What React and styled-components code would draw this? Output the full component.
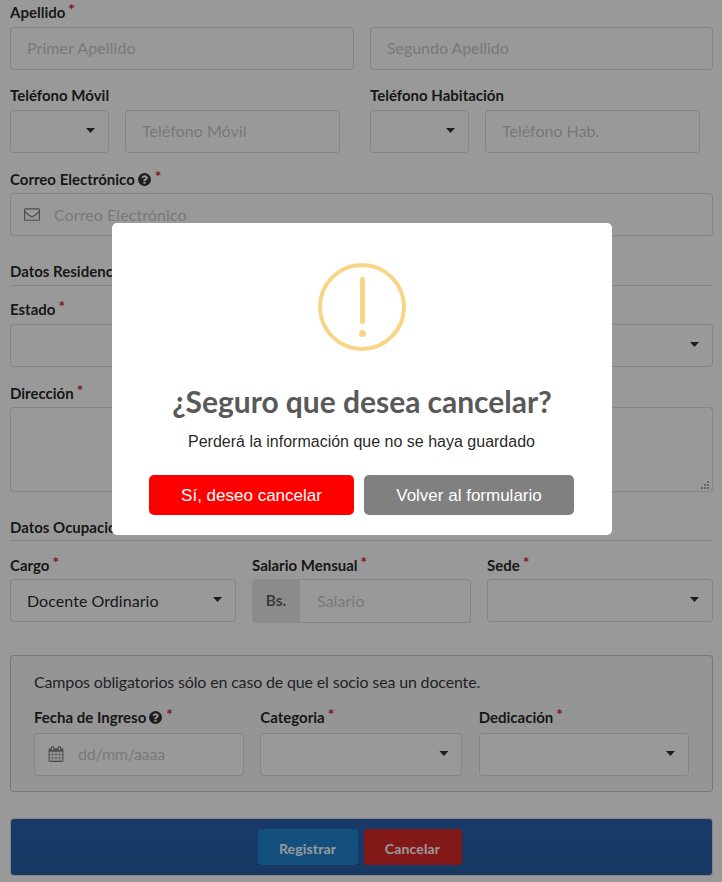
import React from 'react';
import styled, { createGlobalStyle } from 'styled-components';

const GlobalStyle = createGlobalStyle`
  *, *::before, *::after { box-sizing: border-box; }
  html, body { margin: 0; padding: 0; overflow: hidden; background: #fff; }
  body { font-family: Lato, 'Liberation Sans', sans-serif; font-size: 16px; color: rgba(0, 0, 0, 0.87); }
`;

const border = '1px solid rgba(34, 36, 38, 0.15)';

const Form = styled.form`
  width: 703px;
  margin: 0 0 0 10px;
  padding-top: 3px;
  height: 882px;
  overflow: hidden;
`;

const Row = styled.div`
  display: grid;
  grid-template-columns: ${(p) => p.$cols || '1fr'};
  column-gap: ${(p) => p.$colGap ?? 16}px;
  margin-bottom: ${(p) => p.$gap ?? 16}px;
`;

const Group = styled.div`
  display: grid;
  grid-template-columns: 99px 215px;
  column-gap: 16px;
`;

const Label = styled.label`
  display: flex;
  align-items: center;
  height: 20px;
  margin-bottom: 4px;
  font-size: 15px;
  font-weight: 700;
  line-height: 18px;
  padding-bottom: ${(p) => p.$lift ?? 2}px;
  white-space: nowrap;
`;

const Asterisk = styled.span`
  margin: -6px 0 0 3px;
  color: #db2828;
  font-size: 15.5px;
`;

const Control = styled.div`
  display: flex;
  align-items: center;
  min-width: 0;
  height: ${(p) => p.$height || 43}px;
  padding: 0 16px;
  border: ${border};
  border-radius: 4px;
  background: #fff;
`;

const Input = styled.input`
  flex: 1;
  width: 0;
  min-width: 0;
  padding: ${(p) => p.$top ?? 0}px 0 2px;
  border: 0;
  outline: 0;
  background: transparent;
  font: 16px Lato, sans-serif;
  letter-spacing: ${(p) => p.$tracking ?? 0.08}px;
  color: rgba(0, 0, 0, 0.87);
  &::placeholder { color: rgba(191, 191, 191, 0.87); opacity: 1; }
`;

const SelectBox = styled(Control)`
  justify-content: space-between;
  padding-right: 13px;
  letter-spacing: 0.05px;
`;

const Caret = styled.span`
  width: 9px;
  height: 5px;
  margin: -2px 0 0 auto;
  background: rgba(0, 0, 0, 0.8);
  clip-path: polygon(0 0, 100% 0, 50% 100%);
`;

const HelpIcon = styled.svg`
  width: 15px;
  height: 15px;
  margin: 1px 0 0 2px;
  fill: rgba(0, 0, 0, 0.8);
`;

const FieldIcon = styled.svg`
  width: 16px;
  height: 16px;
  margin: -1px 14px 0 -3px;
  fill: rgba(0, 0, 0, 0.5);
`;

const Heading = styled.h4`
  height: 25px;
  margin: 0 0 14px;
  border-bottom: ${border};
  font-size: 15px;
  font-weight: 700;
  line-height: 20px;
  padding-top: ${(p) => p.$top}px;
`;

const TextArea = styled.textarea`
  display: block;
  width: 100%;
  height: 85px;
  border: ${border};
  border-radius: 4px;
  outline: 0;
  resize: none;
  background: #fff;
`;

const AreaWrap = styled.div`
  position: relative;
  margin-bottom: 24px;
`;

const Grip = styled.svg`
  position: absolute;
  right: 4px;
  bottom: 3px;
  width: 8px;
  height: 8px;
  fill: #aaa;
`;

const Prefixed = styled.div`
  display: flex;
  height: 44px;
`;

const Prefix = styled.span`
  display: flex;
  flex: none;
  align-items: center;
  justify-content: center;
  width: 48px;
  padding-bottom: 2px;
  border-radius: 4px 0 0 4px;
  background: #e8e8e8;
  color: rgba(0, 0, 0, 0.6);
  font-size: 15.5px;
  font-weight: 700;
`;

const PrefixedControl = styled(Control)`
  flex: 1;
  border-left: 0;
  border-radius: 0 4px 4px 0;
  padding-left: 17px;
`;

const Message = styled.section`
  height: 137px;
  margin-bottom: 26px;
  padding: 16px 23px 0;
  border: 1px solid rgba(34, 36, 38, 0.22);
  border-radius: 4px;
  background: #f8f8f9;
`;

const MessageText = styled.p`
  height: 20px;
  margin: 0 0 17px;
  font-size: 16px;
  line-height: 20px;
  letter-spacing: -0.16px;
  white-space: nowrap;
  color: rgba(0, 0, 0, 0.8);
`;

const ActionBar = styled.footer`
  display: flex;
  justify-content: center;
  gap: 6px;
  height: 58px;
  padding: 10px 3px 0 0;
  border: 1px solid rgba(34, 36, 38, 0.15);
  border-radius: 4px;
  background: linear-gradient(#2962ae, #265ea5) padding-box;
`;

const ActionButton = styled.button`
  width: ${(p) => p.$width}px;
  height: 36px;
  padding: 2px 1px 0 0;
  border: 0;
  border-radius: 4px;
  background: ${(p) => p.$color};
  color: #fff;
  font: 700 14px Lato, sans-serif;
  letter-spacing: 0.15px;
`;

const Overlay = styled.div`
  position: fixed;
  inset: 0;
  padding: 223px 0 0 112px;
  background: rgba(0, 0, 0, 0.4);
`;

const Modal = styled.div`
  display: flex;
  flex-direction: column;
  align-items: center;
  width: 500px;
  height: 312px;
  padding-top: 40px;
  border-radius: 5px;
  background: #fff;
`;

const WarningIcon = styled.svg`
  width: 88px;
  height: 88px;
`;

const Title = styled.h2`
  margin: 30px 0 0;
  height: 40px;
  color: #595959;
  font-size: 30px;
  font-weight: 700;
  line-height: 40px;
  letter-spacing: -0.03px;
  white-space: nowrap;
`;

const ModalText = styled.p`
  margin: 11px 1px 0 0;
  height: 20px;
  font: 16px/20px 'Liberation Sans', sans-serif;
`;

const ModalActions = styled.div`
  display: flex;
  gap: 10px;
  margin: 23px 1px 0 0;
  padding-right: 1px;
`;

const ModalButton = styled.button`
  width: ${(p) => p.$width}px;
  height: 40px;
  padding: 1px 0 0 1px;
  border: 0;
  border-radius: 5px;
  background: ${(p) => p.$color};
  color: #fff;
  font: 17px 'Liberation Sans', sans-serif;
`;

const Help = () => (
  <HelpIcon viewBox="0 0 1792 1792">
    <path d="M1024 1376v-192q0-14-9-23t-23-9h-192q-14 0-23 9t-9 23v192q0 14 9 23t23 9h192q14 0 23-9t9-23zm256-672q0-88-55.5-163t-138.5-116-170-41q-243 0-371 213-15 24 8 42l132 100q7 6 19 6 16 0 25-12 53-68 86-92 34-24 86-24 48 0 85.5 26t37.5 59q0 38-20 61t-68 45q-63 28-115.5 86.5t-52.5 125.5v36q0 14 9 23t23 9h192q14 0 23-9t9-23q0-19 21.5-49.5t54.5-49.5q32-18 49-28.5t46-35 44.5-48 28-60.5 12.5-81zm384 192q0 209-103 385.5t-279.5 279.5-385.5 103-385.5-103-279.5-279.5-103-385.5 103-385.5 279.5-279.5 385.5-103 385.5 103 279.5 279.5 103 385.5z" />
  </HelpIcon>
);

const Envelope = () => (
  <FieldIcon viewBox="0 0 1792 1792">
    <path d="M1664 1504v-768q-32 36-69 66-268 206-426 338-51 43-83 67t-86.5 48.5-102.5 24.5h-2q-48 0-102.5-24.5t-86.5-48.5-83-67q-158-132-426-338-37-30-69-66v768q0 13 9.5 22.5t22.5 9.5h1472q13 0 22.5-9.5t9.5-22.5zm0-1051v-24.5l-.5-13-3-12.5-5.5-9-9-7.5-14-2.5h-1472q-13 0-22.5 9.5t-9.5 22.5q0 168 147 284 193 152 401 317 6 5 35 29.5t46 37.5 44.5 31.5 50.5 27.5 43 9h2q20 0 43-9t50.5-27.5 44.5-31.5 46-37.5 35-29.5q208-165 401-317 54-43 100.5-115.5t46.5-131.5zm128-37v1088q0 66-47 113t-113 47h-1472q-66 0-113-47t-47-113v-1088q0-66 47-113t113-47h1472q66 0 113 47t47 113z" />
  </FieldIcon>
);

const Calendar = () => (
  <FieldIcon viewBox="0 0 1792 1792">
    <path d="M192 1664h288v-288h-288v288zm352 0h320v-288h-320v288zm-352-352h288v-320h-288v320zm352 0h320v-320h-320v320zm-352-384h288v-288h-288v288zm736 736h320v-288h-320v288zm-384-736h320v-288h-320v288zm768 736h288v-288h-288v288zm-384-352h320v-320h-320v320zm-352-864v-288q0-13-9.5-22.5t-22.5-9.5h-64q-13 0-22.5 9.5t-9.5 22.5v288q0 13 9.5 22.5t22.5 9.5h64q13 0 22.5-9.5t9.5-22.5zm736 864h288v-320h-288v320zm-384-384h320v-288h-320v288zm384 0h288v-288h-288v288zm32-480v-288q0-13-9.5-22.5t-22.5-9.5h-64q-13 0-22.5 9.5t-9.5 22.5v288q0 13 9.5 22.5t22.5 9.5h64q13 0 22.5-9.5t9.5-22.5zm384-64v1280q0 52-38 90t-90 38h-1408q-52 0-90-38t-38-90v-1280q0-52 38-90t90-38h128v-96q0-66 47-113t113-47h64q66 0 113 47t47 113v96h384v-96q0-66 47-113t113-47h64q66 0 113 47t47 113v96h128q52 0 90 38t38 90z" />
  </FieldIcon>
);

const FieldLabel = ({ children, required, help, lift }) => (
  <Label $lift={lift}>
    {children}
    {help && <Help />}
    {required && <Asterisk>*</Asterisk>}
  </Label>
);

const TextInput = ({ placeholder, icon, tracking, top }) => (
  <Control>
    {icon}
    <Input placeholder={placeholder} $tracking={tracking} $top={top} />
  </Control>
);

const Select = ({ children }) => (
  <SelectBox>
    {children}
    <Caret />
  </SelectBox>
);

export default function App() {
  return (
    <>
      <GlobalStyle />
      <Form>
        <FieldLabel required>Apellido</FieldLabel>
        <Row $cols="344px 343px">
          <TextInput placeholder="Primer Apellido" />
          <TextInput placeholder="Segundo Apellido" tracking={-0.05} />
        </Row>
        <Row $cols="344px 343px">
          <div>
            <FieldLabel>Teléfono Móvil</FieldLabel>
            <Group>
              <Select />
              <TextInput placeholder="Teléfono Móvil" tracking={0.04} />
            </Group>
          </div>
          <div>
            <FieldLabel>Teléfono Habitación</FieldLabel>
            <Group>
              <Select />
              <TextInput placeholder="Teléfono Hab." tracking={0} />
            </Group>
          </div>
        </Row>
        <Row $gap={25}>
          <div>
            <FieldLabel required help lift={1}>Correo Electrónico</FieldLabel>
            <TextInput placeholder="Correo Electrónico" icon={<Envelope />} top={2} />
          </div>
        </Row>
        <Heading $top={0}>Datos Residenciales</Heading>
        <Row>
          <div>
            <FieldLabel required>Estado</FieldLabel>
            <Select />
          </div>
        </Row>
        <FieldLabel required lift={1}>Dirección</FieldLabel>
        <AreaWrap>
          <TextArea />
          <Grip viewBox="0 0 8 8">
            <path d="M6 0h2v2H6zM3 3h2v2H3zM6 3h2v2H6zM0 6h2v2H0zM3 6h2v2H3zM6 6h2v2H6z" />
          </Grip>
        </AreaWrap>
        <Heading $top={1}>Datos Ocupacionales</Heading>
        <Row $cols="226px 219px 226px" $gap={32}>
          <div>
            <FieldLabel required lift={1}>Cargo</FieldLabel>
            <Select>Docente Ordinario</Select>
          </div>
          <div>
            <FieldLabel required lift={1}>Salario Mensual</FieldLabel>
            <Prefixed>
              <Prefix>Bs.</Prefix>
              <PrefixedControl $height={44}>
                <Input placeholder="Salario" />
              </PrefixedControl>
            </Prefixed>
          </div>
          <div>
            <FieldLabel required lift={1}>Sede</FieldLabel>
            <Select />
          </div>
        </Row>
        <Message>
          <MessageText>Campos obligatorios sólo en caso de que el socio sea un docente.</MessageText>
          <Row $cols="210px 202.1px 210.2px" $colGap={16.3}>
            <div>
              <FieldLabel required help lift={4}>Fecha de Ingreso</FieldLabel>
              <TextInput placeholder="dd/mm/aaaa" icon={<Calendar />} tracking={-0.25} />
            </div>
            <div>
              <FieldLabel required lift={4}>Categoria</FieldLabel>
              <Select />
            </div>
            <div>
              <FieldLabel required lift={4}>Dedicación</FieldLabel>
              <Select />
            </div>
          </Row>
        </Message>
        <ActionBar>
          <ActionButton type="button" $width={100} $color="#2185d0">Registrar</ActionButton>
          <ActionButton type="button" $width={98} $color="#db2828">Cancelar</ActionButton>
        </ActionBar>
      </Form>
      <Overlay>
        <Modal role="dialog">
          <WarningIcon viewBox="0 0 88 88">
            <circle cx="44" cy="44" r="42" fill="none" stroke="#f8d486" strokeWidth="4" />
            <rect x="42" y="14" width="5" height="47" rx="2" fill="#f8d486" />
            <circle cx="44.5" cy="70.5" r="3.5" fill="#f8d486" />
          </WarningIcon>
          <Title>¿Seguro que desea cancelar?</Title>
          <ModalText>Perderá la información que no se haya guardado</ModalText>
          <ModalActions>
            <ModalButton $width={205} $color="#f00">Sí, deseo cancelar</ModalButton>
            <ModalButton $width={210} $color="#808080">Volver al formulario</ModalButton>
          </ModalActions>
        </Modal>
      </Overlay>
    </>
  );
}
